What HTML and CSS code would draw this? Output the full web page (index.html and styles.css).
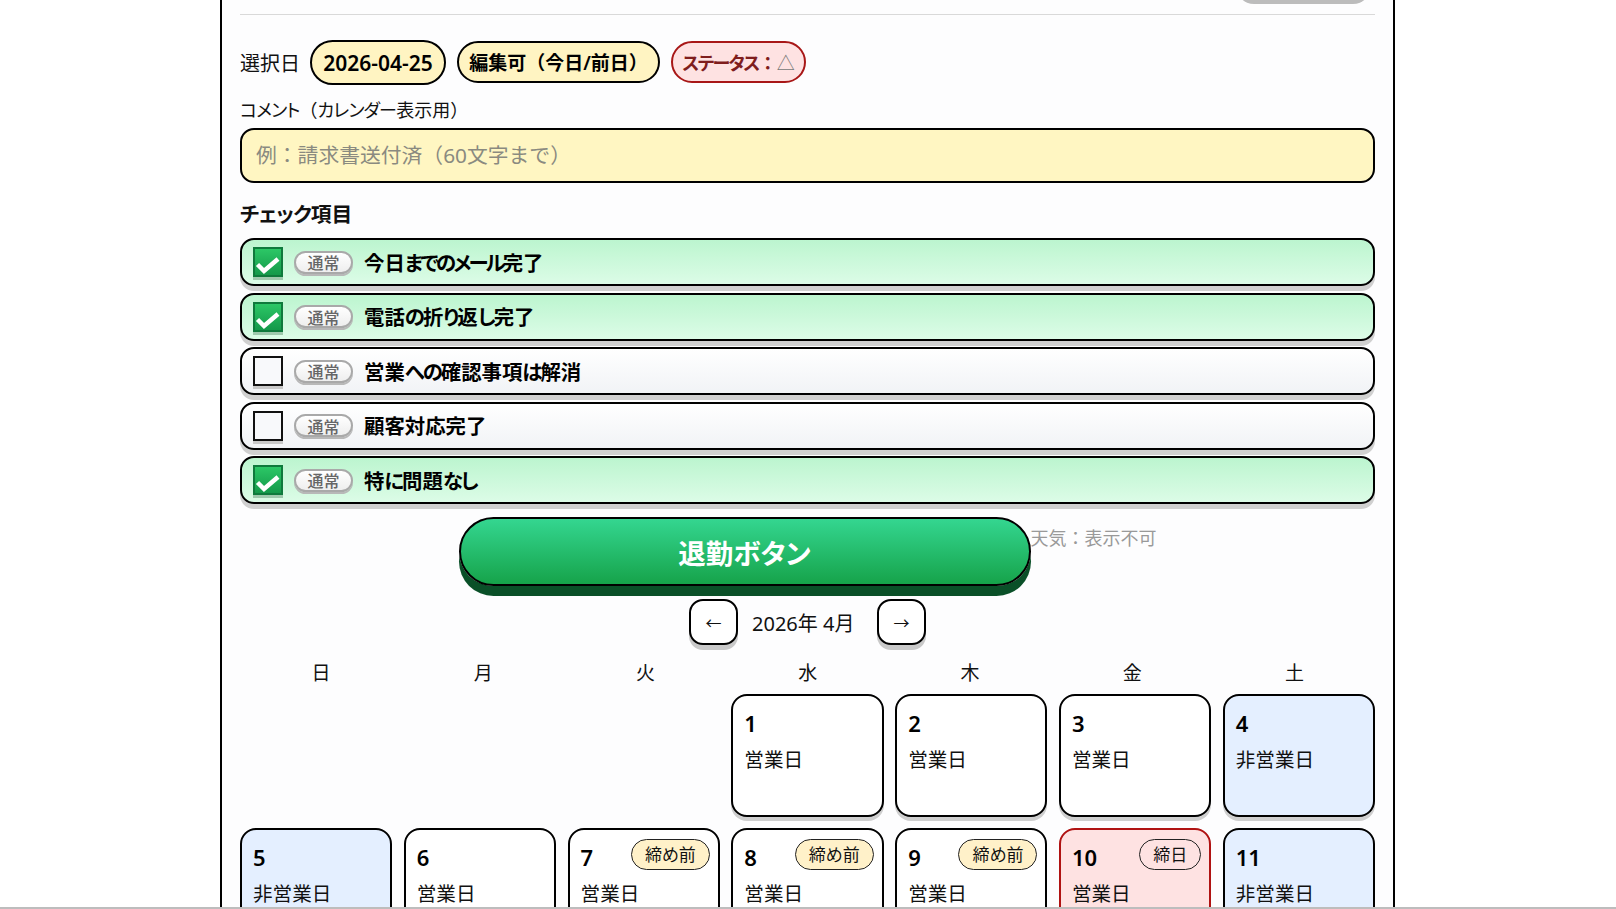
FILE: index.html
```html
<!DOCTYPE html>
<html lang="ja">
<head>
<meta charset="utf-8">
<title>チェック項目</title>
<link rel="stylesheet" href="styles.css">
</head>
<body>
<div class="viewport">
<main class="frame">
  <div class="topbar"><span class="top-pill"></span></div>

  <div class="select-row">
    <span class="select-label">選択日</span>
    <span class="pill pill-date">2026-04-25</span>
    <span class="pill pill-edit">編集可（今日/前日）</span>
    <span class="pill pill-status"><span class="kn">ステータス</span>：<span class="tri">△</span></span>
  </div>

  <label class="comment-label" for="comment"><span class="kn">コメント</span>（<span class="kn">カレンダー</span>表示用）</label>
  <input id="comment" class="comment-input" type="text" placeholder="例：請求書送付済（60文字まで）">

  <h2 class="check-title"><span class="kn">チェック</span>項目</h2>
  <div class="check-list">
    <div class="check-row on">
      <span class="box"><svg viewBox="0 0 30 30"><polyline points="4.5,17.5 11,24 25,12"/></svg></span>
      <span class="tag">通常</span><span class="check-text">今日<span class="kn tight">までのメール</span>完了</span>
    </div>
    <div class="check-row on">
      <span class="box"><svg viewBox="0 0 30 30"><polyline points="4.5,17.5 11,24 25,12"/></svg></span>
      <span class="tag">通常</span><span class="check-text">電話<span class="kn">の</span>折<span class="kn">り</span>返<span class="kn">し</span>完了</span>
    </div>
    <div class="check-row">
      <span class="box"></span>
      <span class="tag">通常</span><span class="check-text">営業<span class="kn">への</span>確認事項<span class="kn">は</span>解消</span>
    </div>
    <div class="check-row">
      <span class="box"></span>
      <span class="tag">通常</span><span class="check-text">顧客対応完了</span>
    </div>
    <div class="check-row on">
      <span class="box"><svg viewBox="0 0 30 30"><polyline points="4.5,17.5 11,24 25,12"/></svg></span>
      <span class="tag">通常</span><span class="check-text">特<span class="kn">に</span>問題<span class="kn">なし</span></span>
    </div>
  </div>

  <div class="action-row">
    <button class="leave-btn" type="button">退勤ボタン</button>
    <span class="weather">天気：表示不可</span>
  </div>

  <div class="month-nav">
    <button class="nav-btn" type="button">←</button>
    <span class="month-label">2026年 4月</span>
    <button class="nav-btn" type="button">→</button>
  </div>

  <div class="weekdays">
    <span>日</span><span>月</span><span>火</span><span>水</span><span>木</span><span>金</span><span>土</span>
  </div>

  <div class="calendar">
    <div class="cell-empty"></div>
    <div class="cell-empty"></div>
    <div class="cell-empty"></div>
    <div class="cell"><div class="num">1</div><div class="kind">営業日</div></div>
    <div class="cell"><div class="num">2</div><div class="kind">営業日</div></div>
    <div class="cell"><div class="num">3</div><div class="kind">営業日</div></div>
    <div class="cell off"><div class="num">4</div><div class="kind">非営業日</div></div>
    <div class="cell off"><div class="num">5</div><div class="kind">非営業日</div></div>
    <div class="cell"><div class="num">6</div><div class="kind">営業日</div></div>
    <div class="cell"><div class="num">7</div><div class="kind">営業日</div><span class="mark">締め前</span></div>
    <div class="cell"><div class="num">8</div><div class="kind">営業日</div><span class="mark">締め前</span></div>
    <div class="cell"><div class="num">9</div><div class="kind">営業日</div><span class="mark">締め前</span></div>
    <div class="cell due"><div class="num">10</div><div class="kind">営業日</div><span class="mark mark-due">締日</span></div>
    <div class="cell off"><div class="num">11</div><div class="kind">非営業日</div></div>
  </div>
</main>
</div>
</body>
</html>
```
FILE: styles.css
```css
* { box-sizing: border-box; }
html, body { margin: 0; padding: 0; background: #fff; }
body {
  font-family: "Noto Sans", "Noto Sans CJK JP", sans-serif;
  color: #111;
}
.kn {
  font-feature-settings: "palt";
  letter-spacing: -0.8px;
}
.viewport {
  height: 909px;
  overflow: hidden;
  border-bottom: 2px solid #bdbdbd;
}
.frame {
  width: 1175px;
  margin: -60px 0 0 220px;
  padding: 0 18px 40px;
  border-left: 2px solid #000;
  border-right: 2px solid #000;
  background: #fdfdfe;
}
.topbar {
  height: 75px;
  display: flex;
  justify-content: flex-end;
  border-bottom: 1px solid #d9d9d9;
}
.top-pill {
  width: 135px;
  height: 64px;
  margin-right: 4px;
  border-radius: 18px;
  background: #bcbcbc;
}
.select-row {
  display: flex;
  align-items: center;
  gap: 11px;
  margin-top: 25px;
  height: 45px;
}
.select-label { font-size: 20px; margin-right: -1px; color: #111; }
.pill {
  display: inline-flex;
  align-items: center;
  justify-content: center;
  border: 2px solid #000;
  border-radius: 24px;
  background: #fff4c2;
  color: #000;
}
.pill-date { width: 136px; height: 45px; font-size: 21px; font-weight: 600; }
.pill-edit { width: 203px; height: 42px; margin-bottom: 2px; font-size: 19px; font-weight: 600; }
.pill-status {
  width: 135px;
  height: 42px;
  margin-bottom: 2px;
  font-size: 18px;
  font-weight: 600;
  color: #7f1d1d;
  background: #fee2e2;
  border-color: #a81717;
}
.pill-status .kn { letter-spacing: -1.6px; }
.tri { font-weight: 400; color: #777; font-size: 18px; }
.comment-label {
  display: block;
  margin-top: 13px;
  margin-bottom: 6px;
  font-size: 18px;
  line-height: 24px;
  color: #111;
}
.comment-input {
  display: block;
  width: 100%;
  height: 55px;
  padding: 0 14px 2px;
  border: 2px solid #000;
  border-radius: 14px;
  background: #fff6c2;
  font: inherit;
  font-size: 20.8px;
  outline: none;
}
.comment-input::placeholder { color: #8a8a80; opacity: 1; }
.check-title {
  margin: 17px 0 10px;
  font-size: 20.8px;
  line-height: 28px;
  font-weight: 700;
  color: #111;
}
.check-list { display: flex; flex-direction: column; gap: 6.5px; }
.check-row {
  display: flex;
  align-items: center;
  height: 48px;
  padding: 0 11px;
  border: 2px solid #000;
  border-radius: 14px;
  background: linear-gradient(#ffffff, #f1f3f6);
  box-shadow: 0 5px 0 #d0d0d0;
}
.check-row.on { background: linear-gradient(#bcf5cf, #dcfce7); }
.box {
  flex: none;
  width: 30px;
  height: 30px;
  border: 2px solid #111;
  background: #f8f9fb;
  box-shadow: 0 3px 0 #c9c9c9;
}
.on .box {
  border-color: #0f7a3c;
  background: linear-gradient(#2cc766, #14994a);
  box-shadow: 0 3px 0 #9fc9ad;
}
.box svg {
  display: block;
  width: 30px;
  height: 30px;
  margin: -2px;
  fill: none;
  stroke: #fff;
  stroke-width: 4.5;
}
.tag {
  flex: none;
  display: flex;
  align-items: center;
  justify-content: center;
  width: 59px;
  height: 23px;
  margin-left: 11px;
  border: 2px solid #a9a9a9;
  border-radius: 12px;
  background: linear-gradient(#fff, #eeeeee);
  box-shadow: 0 2px 0 #b8b8b8;
  color: #666;
  font-size: 16px;
  font-weight: 500;
}
.check-text { margin: 0 0 1px 11px; font-size: 20.4px; font-weight: 600; color: #000; }
.check-text .kn { letter-spacing: -2px; }
.check-text .kn.tight { letter-spacing: -2.8px; }
.action-row {
  display: flex;
  justify-content: center;
  align-items: flex-start;
  gap: 0;
  margin-top: 13px;
}
.leave-btn {
  width: 572px;
  height: 69px;
  border: 2px solid #000;
  border-radius: 35px;
  background: linear-gradient(#34d690, #16a34a);
  box-shadow: 0 10px 0 #0a5028;
  color: #fff;
  font: inherit;
  font-size: 27.5px;
  font-weight: 700;
  font-feature-settings: "palt";
}
.weather { margin-top: 9px; font-size: 18px; line-height: 24px; color: #999; }
.month-nav {
  display: flex;
  justify-content: center;
  align-items: center;
  gap: 14px;
  margin-top: 13px;
}
.nav-btn {
  width: 49px;
  height: 46px;
  padding: 0;
  border: 2px solid #000;
  border-radius: 14px;
  background: #fff;
  box-shadow: 0 5px 0 #c9c9c9;
  color: #111;
  font: inherit;
  font-size: 16px;
}
.month-label { width: 111px; text-align: left; font-size: 20px; white-space: nowrap; color: #111; }
.weekdays {
  display: grid;
  grid-template-columns: repeat(7, 162.25px);
  margin-top: 16px;
  font-size: 19px;
  line-height: 24px;
  text-align: center;
  color: #111;
}
.calendar {
  display: grid;
  grid-template-columns: repeat(7, 1fr);
  grid-auto-rows: 123px;
  column-gap: 11.5px;
  row-gap: 11px;
  margin-top: 9px;
}
.cell {
  position: relative;
  padding: 15px 11px;
  border: 2px solid #000;
  border-radius: 16px;
  background: #fff;
  box-shadow: 0 4px 0 #cfcfcf;
}
.cell.off { background: #e4efff; }
.cell.due { background: #fee2e2; border-color: #b01212; }
.num { font-size: 22px; line-height: 24px; font-weight: 600; color: #000; }
.kind { margin-top: 13px; font-size: 19.6px; line-height: 24px; color: #111; }
.mark {
  position: absolute;
  top: 9px;
  right: 8px;
  padding: 0 13px;
  height: 31px;
  line-height: 29px;
  border: 1px solid #222;
  border-radius: 16px;
  background: #fff1c9;
  font-size: 17px;
  font-feature-settings: "palt";
  color: #111;
}
.mark-due { background: transparent; }
```
